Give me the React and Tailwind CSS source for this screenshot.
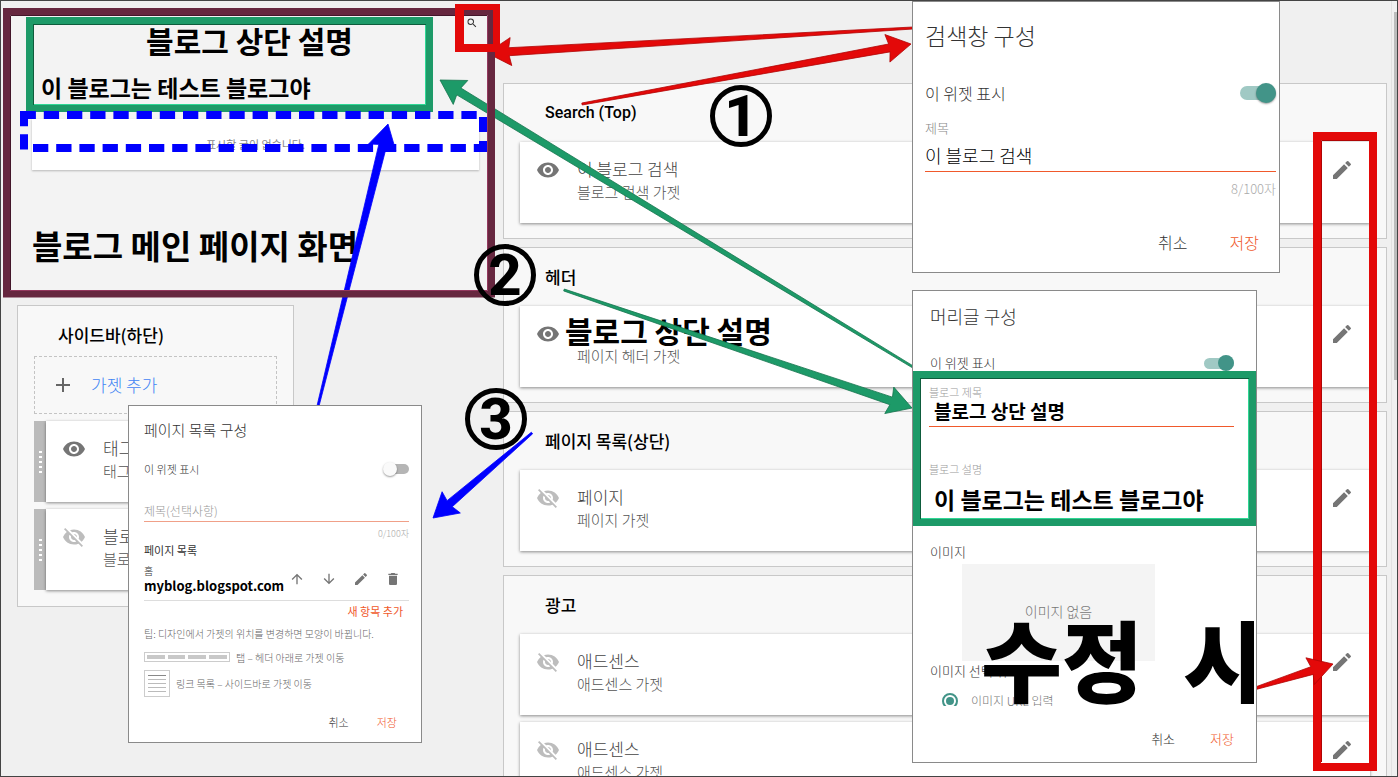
import React from 'react'
import clsx from 'clsx'
import {
    MdVisibility,
    MdVisibilityOff,
    MdEdit,
    MdAdd,
    MdArrowUpward,
    MdArrowDownward,
    MdDelete,
    MdSearch
} from 'react-icons/md'

const sections = [
    {
        title: 'Search (Top)',
        titleClass: 'font-[Roboto,sans-serif] text-base',
        items: [{ name: '이 블로그 검색', type: '블로그 검색 가젯', visible: true }]
    },
    { title: '헤더', items: [{ name: '블로그 상단 설명', type: '페이지 헤더 가젯', visible: true, big: true }] },
    { title: '페이지 목록(상단)', items: [{ name: '페이지', type: '페이지 가젯', visible: false }] },
    {
        title: '광고',
        items: [
            { name: '애드센스', type: '애드센스 가젯', visible: false },
            { name: '애드센스', type: '애드센스 가젯', visible: false }
        ]
    }
]

const sidebarItems = [
    { name: '태그', type: '태그 가젯', visible: true },
    { name: '블로그 보관함', type: '블로그 보관함 가젯', visible: false }
]

const VisibilityIcon = ({ visible }) =>
    visible ? (
        <MdVisibility size={24} className="shrink-0 text-[#757575]" />
    ) : (
        <MdVisibilityOff size={24} className="shrink-0 text-[#bdbdbd]" />
    )

const Gadget = ({ name, type, visible, big, editable }) => (
    <div className="flex h-[81px] flex-1 items-start bg-white px-4 pt-4 shadow-[0_1px_3px_rgba(0,0,0,0.45)]">
        <VisibilityIcon visible={visible} />
        <div className="ml-[17px] flex-1 whitespace-nowrap">
            <p
                className={clsx(
                    'h-6',
                    big ? '-ml-3 text-[30px] leading-4 font-bold text-black' : 'text-[17px] leading-[22px] font-light text-[#444]'
                )}
            >
                {name}
            </p>
            <p className="text-[15px] leading-5 font-light text-[#555]">{type}</p>
        </div>
        {editable && (
            <button aria-label="수정" className="text-[#757575]">
                <MdEdit size={24} />
            </button>
        )}
    </div>
)

const Section = ({ title, titleClass = 'text-[17px]', items }) => (
    <section className="border border-[#c8c8c8] bg-[#f8f8f8] px-4 pb-[15px]">
        <h2 className={clsx('flex h-[58px] items-center pl-[25px] font-medium text-black', titleClass)}>{title}</h2>
        <div className="flex flex-col gap-[7px]">
            {items.map((item, i) => (
                <div key={i} className="flex">
                    <Gadget {...item} editable />
                </div>
            ))}
        </div>
    </section>
)

const BlogPreview = () => (
    <div className="mt-[7px] ml-0.5 h-[290px] w-[492px] pt-[9px] pl-[23px]">
        <header className="h-[95px] w-[407px] border-[7px] border-[#1d9a68] shadow-[inset_1px_1px_0_#0e5c3c,inset_-1px_-1px_0_#2fd795]">
            <h1 className="pl-10 text-center text-[30px] leading-8 font-bold text-black">블로그 상단 설명</h1>
            <p className="mt-[15px] pl-2 text-[23px] leading-8 font-bold text-black">이 블로그는 테스트 블로그야</p>
        </header>
        <div className="mt-[7px] ml-1.5 flex h-[51px] w-[447px] items-center justify-center bg-white text-[11px] text-[#888] shadow-[0_1px_2px_rgba(0,0,0,0.25)]">
            표시할 글이 없습니다.
        </div>
        <p className="mt-[55px] ml-1.5 text-[33px] leading-10 font-bold whitespace-nowrap text-black">
            블로그 메인 페이지 화면
        </p>
    </div>
)

const Sidebar = () => (
    <aside className="mt-[7px] ml-4 w-[277px] border border-[#c8c8c8] bg-[#f8f8f8] px-4 pb-4">
        <h2 className="flex h-[50px] items-center pt-2 pl-6 text-[17px] font-medium text-black">사이드바(하단)</h2>
        <button className="flex h-[58px] w-full items-center gap-4 border border-dashed border-[#c4c4c4] pl-4 text-[17px] font-light text-[#4285f4]">
            <MdAdd size={24} className="text-[#666]" />
            가젯 추가
        </button>
        <div className="mt-[7px] flex flex-col gap-[7px]">
            {sidebarItems.map((item) => (
                <div key={item.name} className="flex">
                    <div className="flex w-3 flex-col items-center justify-center gap-[3px] bg-[#bbb]">
                        {[0, 1, 2, 3, 4].map((dot) => (
                            <span key={dot} className="h-0.5 w-[3px] bg-white" />
                        ))}
                    </div>
                    <Gadget {...item} />
                </div>
            ))}
        </div>
    </aside>
)

// from / to are points; the shaft starts thin and widens up to the head
const Arrow = ({ from, to, color, edge = color }) => {
    const [x1, y1] = from
    const [x2, y2] = to
    const length = Math.hypot(x2 - x1, y2 - y1)
    const ux = (x2 - x1) / length
    const uy = (y2 - y1) / length
    const at = (back, side) => `${x2 - ux * back - uy * side},${y2 - uy * back + ux * side}`
    const points = [
        at(length, 1),
        at(22, 4),
        at(24, 14),
        at(0, 0),
        at(24, -14),
        at(22, -4),
        at(length, -1)
    ].join(' ')
    return <polygon points={points} fill={color} stroke={edge} strokeWidth="0.8" />
}

const Annotations = () => (
    <svg className="pointer-events-none absolute -top-px -left-px h-screen w-screen" aria-hidden="true">
        <g fill="none" stroke="#0000fe" strokeWidth="8" strokeDasharray="15.3 7.9">
            <path d="M20 115H479" strokeDashoffset="-0.6" />
            <path d="M33 148H487" />
            <path d="M24 111V150" />
            <path d="M483 117V152" strokeDasharray="15 9" />
        </g>
        <Arrow from={[913, 367]} to={[440, 80]} color="#1d9a68" edge="#14734c" />
        <Arrow from={[564, 290]} to={[912, 408]} color="#1d9a68" edge="#14734c" />
        <Arrow from={[318, 406]} to={[388, 124]} color="#0000fe" />
        <Arrow from={[532, 433]} to={[433, 518]} color="#0000fe" />
        <Arrow from={[582, 104]} to={[911, 44]} color="#e30909" edge="#b00505" />
        <Arrow from={[913, 28]} to={[487, 53]} color="#e30909" edge="#b00505" />
        <rect x="6.5" y="11.5" width="485" height="282.5" fill="none" stroke="#66273f" strokeWidth="7" />
        <path d="M10.5 290.5V15.5H487.5" fill="none" stroke="#43162a" />
        <path d="M10.5 290.5H487.5V15.5" fill="none" stroke="#93385e" />
        <path fill="#e30909" fillRule="evenodd" d="M455 4h45v48H455zM464 10v34h29V10z" />
        <rect x="1317" y="136" width="56" height="631" fill="none" stroke="#e30909" strokeWidth="8" />
        <path d="M1321.500 762V140.500H1369" fill="none" stroke="#b00505" />
        <Arrow from={[1250, 690]} to={[1333, 664]} color="#e30909" edge="#b00505" />
    </svg>
)

const Step = ({ className, children }) => (
    <div
        className={clsx(
            'absolute flex h-[62px] w-[62px] items-center justify-center rounded-full border-[5px] border-black font-[Roboto,sans-serif] text-[58px] leading-none font-extrabold text-black',
            className
        )}
    >
        {children}
    </div>
)

const Dialog = ({ className, label, children }) => (
    <div
        role="dialog"
        aria-label={label}
        className={clsx('absolute flex flex-col border border-[#8a8a8a] bg-white font-light text-[#333]', className)}
    >
        {children}
    </div>
)

const SearchDialog = () => (
    <Dialog label="검색창 구성" className="top-0 left-[911px] h-[272px] w-[368px] pr-[3px] pl-3">
        <h3 className="flex h-[66px] items-center text-[23px]">검색창 구성</h3>
        <label className="flex h-[50px] items-center justify-between text-base">
            이 위젯 표시
            <input
                type="checkbox"
                defaultChecked
                className="relative h-3.5 w-9 appearance-none rounded-full bg-[#a0c9c4] after:absolute after:-top-[3px] after:right-0 after:h-5 after:w-5 after:rounded-full after:bg-[#429488] after:shadow-[0_1px_2px_rgba(0,0,0,0.4)]"
            />
        </label>
        <label htmlFor="search-title" className="mt-px h-5 text-[13px] leading-5 text-[#888]">
            제목
        </label>
        <input
            id="search-title"
            defaultValue="이 블로그 검색"
            className="mt-px h-[33px] border-b border-[#f0592b] text-lg text-black outline-none"
        />
        <p className="h-[34px] text-right text-[13px] leading-[34px] text-[#aaa]">8/100자</p>
        <div className="mt-1.5 flex h-[60px] items-center justify-end gap-[42px] pr-[17px] text-base">
            <button>취소</button>
            <button className="text-[#f0592b]">저장</button>
        </div>
    </Dialog>
)

const HeaderDialog = () => (
    <Dialog label="머리글 구성" className="top-[289px] left-[911px] h-[473px] w-[345px]">
        <h3 className="flex h-[50px] items-center pl-[17px] text-lg">머리글 구성</h3>
        <label className="mt-2 flex h-7 items-center justify-between pr-[22px] pl-[17px] text-[13px]">
            이 위젯 표시
            <input
                type="checkbox"
                defaultChecked
                className="relative h-[11px] w-[30px] appearance-none rounded-full bg-[#a0c9c4] after:absolute after:-top-[3px] after:right-0 after:h-4 after:w-4 after:rounded-full after:bg-[#429488]"
            />
        </label>
        <div className="relative -mt-1.5 flex h-[155px] flex-col border-[7px] border-[#1d9a68] bg-white pt-1.5 pr-[15px] pl-[9px] shadow-[inset_1px_1px_0_#0e5c3c,inset_-1px_-1px_0_#2fd795]">
            <label htmlFor="blog-title" className="h-4 text-[11px] leading-4 text-[#999]">
                블로그 제목
            </label>
            <input
                id="blog-title"
                defaultValue="블로그 상단 설명"
                className="mt-px h-[26px] border-b border-[#f0592b] pb-1 pl-[5px] text-[19px] font-bold text-black outline-none"
            />
            <label htmlFor="blog-description" className="mt-[34px] h-4 text-[11px] leading-4 text-[#999]">
                블로그 설명
            </label>
            <input
                id="blog-description"
                defaultValue="이 블로그는 테스트 블로그야"
                className="mt-1.5 h-8 pl-[5px] text-[23px] font-bold text-black outline-none"
            />
        </div>
        <div className="pl-[17px]">
            <p className="mt-4 h-5 text-[13px] leading-5">이미지</p>
            <div className="mt-0.5 ml-8 flex h-[97px] w-[193px] items-center justify-center bg-[#f4f4f4] pb-1 text-sm text-[#777]">
                이미지 없음
            </div>
            <p className="h-5 text-[13px] leading-5">이미지 선택 위치</p>
            <label className="flex h-[25px] items-start gap-[13px] overflow-hidden pt-3 pl-3 text-xs text-[#777]">
                <input
                    type="radio"
                    name="image-source"
                    defaultChecked
                    className="relative h-4 w-4 shrink-0 appearance-none rounded-full border-2 border-[#429488] after:absolute after:inset-0.5 after:rounded-full after:bg-[#429488]"
                />
                이미지 URL 입력
            </label>
        </div>
        <div className="mt-[13px] flex h-10 items-center justify-end gap-[35px] pr-[22px] text-[13px]">
            <button>취소</button>
            <button className="text-[#f0592b]">저장</button>
        </div>
        {/* clipped at the right edge of the dialog body */}
        <p className="absolute top-[301px] left-[68px] flex w-[273px] gap-10 overflow-hidden text-[88px] leading-[130px] font-black whitespace-nowrap text-black">
            <span>수정</span>
            <span>시</span>
        </p>
    </Dialog>
)

const PageListDialog = () => (
    <Dialog label="페이지 목록 구성" className="top-[404px] left-[127px] h-[338px] w-[294px] pr-3 pl-[15px]">
        <h3 className="flex h-12 items-center text-[15px]">페이지 목록 구성</h3>
        <label className="flex h-[30px] items-center justify-between text-[11px]">
            이 위젯 표시
            <input
                type="checkbox"
                className="relative h-2.5 w-6 appearance-none rounded-full bg-[#b5b5b5] after:absolute after:-top-0.5 after:-left-0.5 after:h-3.5 after:w-3.5 after:rounded-full after:bg-[#fafafa] after:shadow-[0_1px_2px_rgba(0,0,0,0.4)]"
            />
        </label>
        <input
            aria-label="제목(선택사항)"
            placeholder="제목(선택사항)"
            className="mt-4 h-[22px] border-b border-[#f0a088] text-xs outline-none placeholder:text-[#999]"
        />
        <p className="h-5 text-right text-[9px] leading-6 text-[#aaa]">0/100자</p>
        <p className="h-4 text-[11px] leading-4 font-normal">페이지 목록</p>
        <div className="flex h-[43px] items-center border-b border-[#ddd]">
            <div className="flex-1 whitespace-nowrap">
                <p className="text-[10px] leading-[14px]">홈</p>
                <p className="text-[13px] leading-4 font-bold text-black">myblog.blogspot.com</p>
            </div>
            <div className="flex gap-4 pr-2 text-[#757575]">
                <button aria-label="위로">
                    <MdArrowUpward size={16} />
                </button>
                <button aria-label="아래로">
                    <MdArrowDownward size={16} />
                </button>
                <button aria-label="수정">
                    <MdEdit size={16} />
                </button>
                <button aria-label="삭제">
                    <MdDelete size={16} />
                </button>
            </div>
        </div>
        <button className="h-[21px] self-end pr-1.5 text-[11px] font-normal text-[#f0592b]">새 항목 추가</button>
        <p className="h-6 text-[10px] leading-6 text-[#666]">팁: 디자인에서 가젯의 위치를 변경하면 모양이 바뀝니다.</p>
        <div className="flex h-[22px] items-center gap-1.5 text-[10px] text-[#666]">
            <svg width="86" height="10" fill="none">
                <rect x="0.5" y="0.5" width="85" height="9" stroke="#ccc" />
                <path d="M3 5h18M24 5h17M44 5h18M65 5h18" stroke="#c8c8c8" strokeWidth="4" />
            </svg>
            탭 – 헤더 아래로 가젯 이동
        </div>
        <div className="flex h-[30px] items-center gap-1.5 text-[10px] text-[#666]">
            <svg width="26" height="27" fill="none">
                <rect x="0.5" y="0.5" width="25" height="26" stroke="#ccc" />
                <path d="M4 5.500h18" stroke="#888" />
                <path d="M4 9.500h18M4 13.500h18M4 17.500h18M4 21.500h18" stroke="#bbb" />
            </svg>
            링크 목록 – 사이드바로 가젯 이동
        </div>
        <div className="mt-1.5 flex h-9 items-center justify-end gap-7 pr-3 text-[11px]">
            <button>취소</button>
            <button className="text-[#f0592b]">저장</button>
        </div>
    </Dialog>
)

export default function App() {
    return (
        <div className="relative flex h-screen overflow-hidden border border-[#444] bg-[#f0f0f0] font-['Noto_Sans_CJK_KR',sans-serif]">
            <div className="w-[502px] shrink-0">
                <div className="relative">
                    <div className="absolute inset-y-0 top-[7px] left-0.5 w-[492px] bg-[#f3f3f3]" />
                    <div className="relative flow-root">
                        <BlogPreview />
                        <MdSearch size={12} className="absolute top-4 left-[465px] text-[#333]" />
                    </div>
                </div>
                <Sidebar />
            </div>
            <main className="flex flex-1 flex-col gap-2 pt-[82px] pr-1">
                {sections.map((section) => (
                    <Section key={section.title} {...section} />
                ))}
            </main>
            <div className="w-1.5 shrink-0 border-l border-[#e2e2e2] pt-[11px] pl-0.5">
                <div className="h-[368px] bg-[#bcbcbc]" />
            </div>

            <Annotations />
            <Step className="top-[84px] left-[709px]">1</Step>
            <Step className="top-[243px] left-[473px]">2</Step>
            <Step className="top-[387px] left-[464px]">3</Step>
            <SearchDialog />
            <HeaderDialog />
            <PageListDialog />
        </div>
    )
}
